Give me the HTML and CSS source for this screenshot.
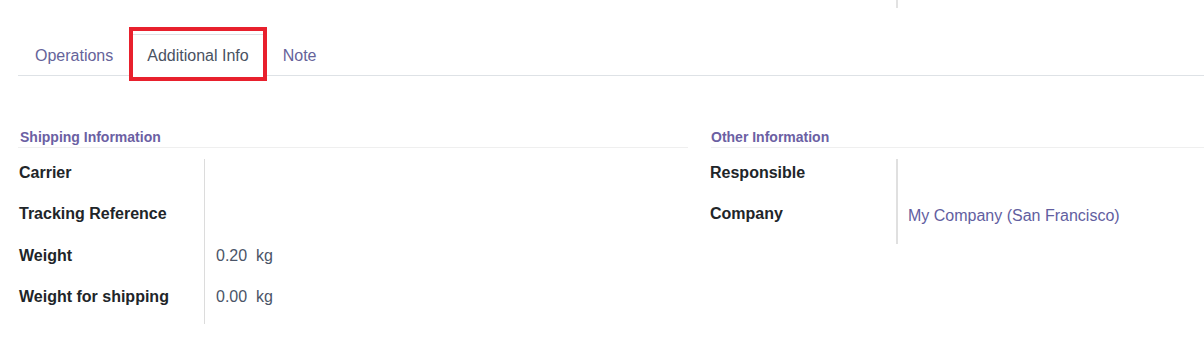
FILE: index.html
```html
<!DOCTYPE html>
<html lang="en">
<head>
  <meta charset="UTF-8">
  <meta name="viewport" content="width=device-width, initial-scale=1.0">
  <title>Transfer - Additional Info</title>
  <link rel="stylesheet" href="styles.css">
</head>
<body>
  <div class="sheet">
    <div class="top-strip">
      <div class="top-sep"></div>
    </div>

    <ul class="tabs">
      <li class="tab">Operations</li>
      <li class="tab active">Additional Info<span class="highlight"></span></li>
      <li class="tab">Note</li>
    </ul>

    <div class="tab-content">
      <div class="group group-left">
        <div class="group-title">Shipping Information</div>
        <div class="fields">
          <div class="label">Carrier</div>
          <div class="value"></div>
          <div class="label">Tracking Reference</div>
          <div class="value"></div>
          <div class="label">Weight</div>
          <div class="value">0.20&nbsp; kg</div>
          <div class="label">Weight for shipping</div>
          <div class="value">0.00&nbsp; kg</div>
        </div>
      </div>

      <div class="group group-right">
        <div class="group-title">Other Information</div>
        <div class="fields">
          <div class="label">Responsible</div>
          <div class="value"></div>
          <div class="label">Company</div>
          <div class="value link">My Company (San Francisco)</div>
        </div>
      </div>
    </div>
  </div>
</body>
</html>
```

FILE: styles.css
```css
body {
  margin: 0;
  font-family: "Liberation Sans", Arial, sans-serif;
  font-size: 16px;
  color: #212529;
  background-color: #fff;
}

.sheet {
  padding-left: 18px;
}

.top-strip {
  height: 8px;
}

.top-sep {
  margin-left: 878px;
  width: 2px;
  height: 8px;
  background-color: #e2e2e2;
}

/* tabs */
.tabs {
  display: flex;
  list-style: none;
  margin: 26px 0 0;
  padding: 0;
  border-bottom: 1px solid #dee2e6;
}

.tab {
  position: relative;
  padding: 11px 16px 9px;
  line-height: 20px;
  color: #65639a;
  border: 1px solid transparent;
  border-bottom: none;
}

.tab.active {
  color: #4a5262;
  border-color: #dee2e6;
  background-color: #fff;
  margin-bottom: -1px;
  padding-bottom: 10px;
}

.highlight {
  position: absolute;
  left: -2px;
  right: -2px;
  top: -8px;
  bottom: -5px;
  border: 4px solid #e8202d;
}

/* content */
.tab-content {
  display: grid;
  grid-template-columns: 670px 1fr;
  column-gap: 23px;
  margin-top: 51px;
}

.group-title {
  font-size: 14px;
  font-weight: bold;
  line-height: 20px;
  color: #6b60a3;
  padding-left: 2px;
  border-bottom: 1px solid #efefef;
  margin-bottom: 11px;
}

.group-right .group-title {
  padding-left: 0;
}

.fields {
  display: grid;
  grid-template-columns: 187px 1fr;
}

.label {
  font-weight: bold;
  line-height: 20px;
  padding: 4px 0 17.25px 1px;
  border-right: 1px solid #dcdcdc;
}

.group-right .label {
  padding-left: 0;
  margin-left: -1px;
  border-right: 2px solid #e0e0e0;
}

.value {
  line-height: 20px;
  padding: 4px 0 17.25px 11px;
  color: #4b5568;
}

.value.link {
  color: #625e9f;
  padding-top: 6px;
  padding-left: 10px;
}
```
